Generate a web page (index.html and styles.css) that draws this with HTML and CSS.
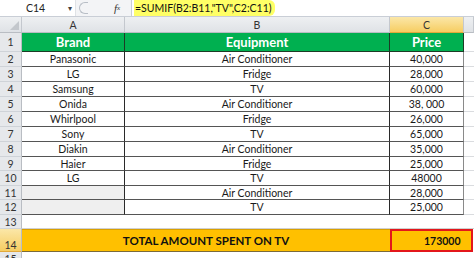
FILE: index.html
```html
<!DOCTYPE html>
<html>
<head>
<meta charset="utf-8">
<link rel="stylesheet" href="styles.css">
</head>
<body>
<div class="app">
  <div class="fbar">
    <div class="namebox"><span class="nb-text">C14</span><span class="nb-arrow">&#9662;</span></div>
    <div class="grip"><span class="grip-circle"></span></div>
    <div class="fx">f<sub>x</sub></div>
    <div class="formula"><span class="ftext">=SUMIF(B2:B11,"TV",C2:C11)</span></div>
  </div>
  <div class="sheet">
    <div class="row colhead">
      <div class="rh corner"><span class="tri"></span></div>
      <div class="c ca">A</div>
      <div class="c cb">B</div>
      <div class="c cc sel">C</div>
      <div class="c cd"></div>
    </div>
    <div class="row r1">
      <div class="rh">1</div>
      <div class="c ca">Brand</div>
      <div class="c cb">Equipment</div>
      <div class="c cc">Price</div>
      <div class="c cd"></div>
    </div>
    <div class="row data"><div class="rh">2</div><div class="c ca">Panasonic</div><div class="c cb">Air Conditioner</div><div class="c cc">40,000</div><div class="c cd"></div></div>
    <div class="row data"><div class="rh">3</div><div class="c ca">LG</div><div class="c cb">Fridge</div><div class="c cc">28,000</div><div class="c cd"></div></div>
    <div class="row data"><div class="rh">4</div><div class="c ca">Samsung</div><div class="c cb">TV</div><div class="c cc">60,000</div><div class="c cd"></div></div>
    <div class="row data"><div class="rh">5</div><div class="c ca">Onida</div><div class="c cb">Air Conditioner</div><div class="c cc">38, 000</div><div class="c cd"></div></div>
    <div class="row data"><div class="rh">6</div><div class="c ca">Whirlpool</div><div class="c cb">Fridge</div><div class="c cc">26,000</div><div class="c cd"></div></div>
    <div class="row data"><div class="rh">7</div><div class="c ca">Sony</div><div class="c cb">TV</div><div class="c cc">65,000</div><div class="c cd"></div></div>
    <div class="row data"><div class="rh">8</div><div class="c ca">Diakin</div><div class="c cb">Air Conditioner</div><div class="c cc">35,000</div><div class="c cd"></div></div>
    <div class="row data short"><div class="rh">9</div><div class="c ca">Haier</div><div class="c cb">Fridge</div><div class="c cc">25,000</div><div class="c cd"></div></div>
    <div class="row data"><div class="rh">10</div><div class="c ca">LG</div><div class="c cb">TV</div><div class="c cc">48000</div><div class="c cd"></div></div>
    <div class="row data short"><div class="rh">11</div><div class="c ca empty"></div><div class="c cb">Air Conditioner</div><div class="c cc">28,000</div><div class="c cd"></div></div>
    <div class="row data"><div class="rh">12</div><div class="c ca empty"></div><div class="c cb">TV</div><div class="c cc">25,000</div><div class="c cd"></div></div>
    <div class="row blank"><div class="rh">13</div><div class="c fill"></div></div>
    <div class="row total">
      <div class="rh sel">14</div>
      <div class="c tlabel">TOTAL AMOUNT SPENT ON TV</div>
      <div class="c tval">173000</div>
    </div>
    <div class="row r15"><div class="rh">15</div><div class="c fill"></div></div>
  </div>
</div>
</body>
</html>
```
FILE: styles.css
```css
* { box-sizing: border-box; margin: 0; padding: 0; }
html, body { width: 474px; height: 258px; overflow: hidden; background: #fff; }
body { font-family: Lato, "Liberation Sans", sans-serif; color: #1a1a1a; }

.app { display: flex; flex-direction: column; width: 474px; }

.fbar {
  height: 17px;
  display: flex;
  align-items: stretch;
  background: #fff;
  border-bottom: 1px solid #c9ced6;
}
.namebox {
  width: 76px;
  display: flex;
  align-items: center;
  font-size: 10.5px;
  color: #222;
  border-right: 1px solid #dfe2e6;
}
.nb-text { padding-left: 26px; flex: 1; }
.nb-arrow { font-size: 8px; color: #444; padding-right: 3px; }
.grip {
  width: 38px;
  display: flex;
  align-items: center;
  padding-left: 3px;
  background: #f3f4f6;
}
.grip-circle {
  width: 9px; height: 12px;
  border: 1px solid #b8bec6;
  border-right: none;
  border-radius: 6px 0 0 6px;
}
.fx {
  width: 18px;
  font-family: "Liberation Serif", serif;
  font-style: italic;
  font-size: 11px;
  color: #333;
  display: flex;
  align-items: center;
  background: #f3f4f6;
  border-right: 1px solid #c9ced6;
}
.fx sub { font-size: 7px; vertical-align: -1px; }
.formula { flex: 1; display: flex; align-items: stretch; padding-left: 2px; }
.ftext {
  background: #ffff66;
  font-size: 10.5px;
  color: #111;
  display: flex;
  align-items: center;
  padding: 0 3px 0 1px;
  border-radius: 0 6px 6px 0;
}

.sheet { display: flex; flex-direction: column; }
.row { display: flex; height: 15px; }
.row.short { height: 14px; }
.rh {
  width: 22px;
  flex: none;
  background: #e6e8eb;
  border-right: 1px solid #b9bdc3;
  border-bottom: 1px solid #cfd3d8;
  font-size: 10.5px;
  color: #333;
  display: flex;
  align-items: center;
  justify-content: center;
}
.c {
  display: flex;
  align-items: center;
  justify-content: center;
  font-size: 10.5px;
  white-space: nowrap;
  overflow: hidden;
}
.ca { width: 103px; flex: none; }
.cb { width: 265px; flex: none; }
.cc { width: 74px; flex: none; }
.cd { flex: 1; }
.fill { flex: 1; }

.colhead { height: 16px; }
.colhead .rh, .colhead .c {
  background: linear-gradient(#eef0f2, #dfe2e6);
  border-right: 1px solid #c4c8ce;
  border-bottom: 1px solid #b9bdc3;
  color: #333;
}
.colhead .cc.sel {
  background: linear-gradient(#fbe7a8, #f6cd62);
  border-bottom: 1px solid #e2a93a;
}
.corner { position: relative; }
.tri {
  width: 0; height: 0;
  border-left: 9px solid transparent;
  border-bottom: 9px solid #c3c7cc;
  position: absolute;
  right: 2px; bottom: 2px;
}

.r1 { height: 19px; }
.r1 .ca, .r1 .cb, .r1 .cc {
  background: #00b050;
  color: #fff;
  font-weight: 700;
  font-size: 13px;
  border-right: 1px solid #1d3b26;
  border-bottom: 1px solid #1d3b26;
}
.r1 .cd, .data .cd { border-bottom: 1px solid #dadcdf; }

.data .ca, .data .cb {
  border-right: 1px solid #2a2a2a;
  border-bottom: 1px solid #555;
}
.data .cc {
  border-right: 1px solid #8a8a8a;
  border-bottom: 1px solid #555;
}
.data .ca.empty { background: #efefef; }

.blank { height: 14px; }
.blank .fill { border-bottom: 1px solid #d0d0d0; }

.total { height: 23px; }
.total .rh.sel {
  background: linear-gradient(#fbe7a8, #f6cd62);
  align-items: flex-end;
  border-bottom: 1px solid #e2a93a;
}
.tlabel {
  width: 368px;
  flex: none;
  background: #ffc000;
  font-weight: 700;
  font-size: 11.5px;
  color: #111;
  border-bottom: 1px solid #7a6a3a;
  border-top: 1px solid #d9a000;
}
.tval {
  flex: 1;
  margin-right: 1px;
  background: #ffc000;
  border: 2px solid #e3161b;
  font-weight: 700;
  font-size: 10.5px;
  color: #111;
  justify-content: flex-start;
  padding-left: 32px;
}
.r15 .fill { background: #fff; }
```
